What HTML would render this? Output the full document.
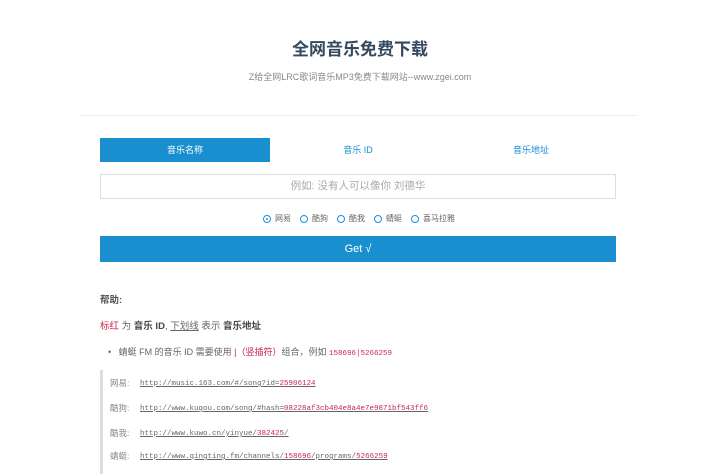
<!DOCTYPE html><html><head><meta charset="utf-8"><style>
body{margin:0;width:720px;height:474px;overflow:hidden;background:#fff;font-family:"Liberation Sans","Noto Sans CJK SC",sans-serif;position:relative}
.a{position:absolute;white-space:nowrap}
.m{font-family:"Liberation Mono",monospace;font-size:7.5px;color:#666;text-decoration:underline;position:absolute;left:30px;top:3px}
.r{color:#c7254e}
.rd{display:inline-block;width:8px;height:8px;border:1.5px solid #1a8fd0;border-radius:50%;vertical-align:-2px;margin-right:4px;box-sizing:border-box;position:relative}
.g{display:inline-block;width:9px}
</style></head><body>
<div class="a" style="left:0;width:720px;top:35px;text-align:center;font-size:17px;font-weight:bold;color:#34495e">全网音乐免费下载</div>
<div class="a" style="left:0;width:720px;top:70px;text-align:center;font-size:9px;color:#888">Z给全网LRC歌词音乐MP3免费下载网站--www.zgei.com</div>
<div class="a" style="left:80px;width:556px;top:115px;height:1px;background:#eee"></div>
<div class="a" style="left:100px;top:138px;width:170px;height:24px;background:#1a8fd0;color:#fff;font-size:9px;text-align:center;line-height:24px">音乐名称</div>
<div class="a" style="left:270px;top:138px;width:176px;height:24px;color:#1a8fd0;font-size:9px;text-align:center;line-height:24px">音乐 ID</div>
<div class="a" style="left:446px;top:138px;width:170px;height:24px;color:#1a8fd0;font-size:9px;text-align:center;line-height:24px">音乐地址</div>
<div class="a" style="left:100px;top:174px;width:516px;height:25px;border:1px solid #ddd;box-sizing:border-box;text-align:center;line-height:23px;font-size:10.5px;color:#aaa">例如: 没有人可以像你 刘德华</div>
<div class="a" style="left:0;width:718px;top:213px;text-align:center;font-size:8px;color:#666"><span class="rd"><span style="position:absolute;left:1.5px;top:1.5px;width:2px;height:2px;background:#1a8fd0;border-radius:50%"></span></span>网易<span class="g"></span><span class="rd"></span>酷狗<span class="g"></span><span class="rd"></span>酷我<span class="g"></span><span class="rd"></span>蜻蜓<span class="g"></span><span class="rd"></span>喜马拉雅</div>
<div class="a" style="left:100px;top:236px;width:516px;height:26px;background:#1a8fd0;color:#fff;font-size:11px;text-align:center;line-height:26px">Get √</div>
<div class="a" style="left:100px;top:292px;font-size:9.5px;color:#555;font-weight:bold">帮助:</div>
<div class="a" style="left:100px;top:318px;font-size:9.5px;color:#666"><span class="r">标红</span> 为 <b style="color:#444">音乐 ID</b>, <u>下划线</u> 表示 <b style="color:#444">音乐地址</b></div>
<div class="a" style="left:108px;top:345px;font-size:9px;color:#666">•&nbsp;&nbsp; 蜻蜓 FM 的音乐 ID 需要使用 <span class="r">|（竖插符）</span>组合，例如 <span class="r" style="font-family:'Liberation Mono',monospace;font-size:7.5px">158696|5266259</span></div>
<div class="a" style="left:100px;top:370px;width:3px;height:104px;background:#ddd"></div>
<div class="a" style="left:110px;top:377px;font-size:8.5px;color:#888">网易: <span class="m">http://music.163.com/#/song?id=<span class="r">25906124</span></span></div>
<div class="a" style="left:110px;top:402px;font-size:8.5px;color:#888">酷狗: <span class="m">http://www.kugou.com/song/#hash=<span class="r">08228af3cb404e8a4e7e9871bf543ff6</span></span></div>
<div class="a" style="left:110px;top:427px;font-size:8.5px;color:#888">酷我: <span class="m">http://www.kuwo.cn/yinyue/<span class="r">382425</span>/</span></div>
<div class="a" style="left:110px;top:450px;font-size:8.5px;color:#888">蜻蜓: <span class="m">http://www.qingting.fm/channels/<span class="r">158696</span>/programs/<span class="r">5266259</span></span></div>
</body></html>
